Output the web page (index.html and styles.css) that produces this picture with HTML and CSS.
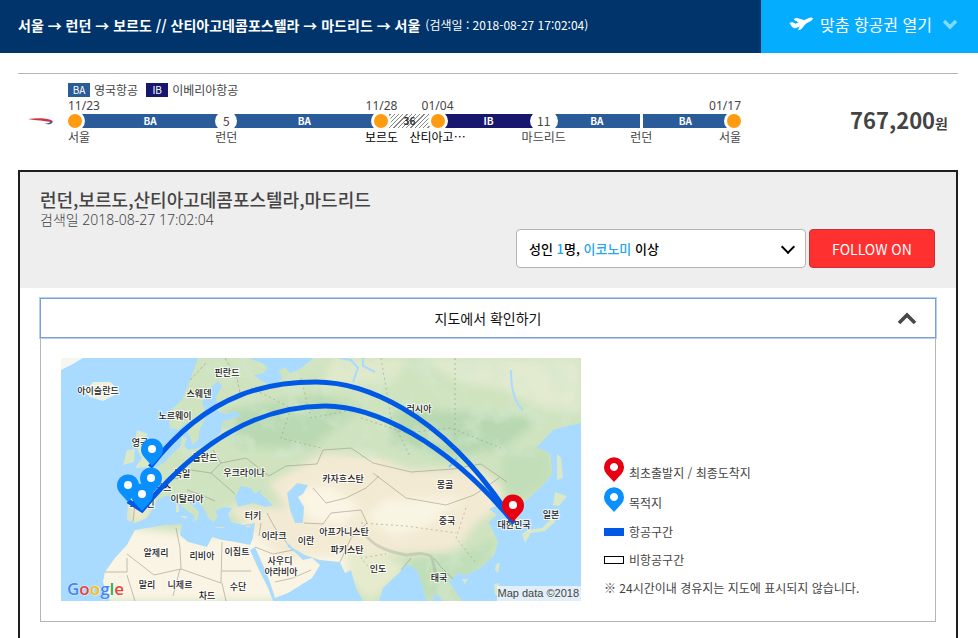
FILE: index.html
```
<!DOCTYPE html>
<html lang="ko">
<head>
    <meta charset="UTF-8">
    <meta name="viewport" content="width=device-width, initial-scale=1.0">
    <title>항공권 검색 결과</title>
    <link rel="stylesheet" href="styles.css">
</head>
<body>

    <!-- 상단 바 -->
    <header class="topbar">
        <div class="topbar-route">
            <h1>서울 → 런던 → 보르도 // 산티아고데콤포스텔라 → 마드리드 → 서울</h1>
            <span class="topbar-date">(검색일 : 2018-08-27 17:02:04)</span>
        </div>
        <button type="button" class="topbar-open">
            <svg class="icon-plane" viewBox="0 0 24 16" aria-hidden="true">
                <path d="M1 7.2 L3.2 6.6 L6.6 8.2 L10.6 6.4 L5 3.4 L7.4 2.4 L15.4 4.6 L19.6 2.6 C21.4 1.8 23.2 1.8 23.4 2.4 C23.6 3.2 22.6 4.2 21.4 4.8 L17 7 L11.8 13 L9.6 13.8 L11.6 9.6 L7.4 11.4 C5.8 12 4.4 12 3.6 11 Z" fill="#fff" stroke="#fff" stroke-linejoin="round"/>
            </svg>
            맞춤 항공권 열기
            <svg class="icon-chevron" viewBox="0 0 16 12" aria-hidden="true">
                <path d="M2 3 L8 9 L14 3" fill="none" stroke="#7fdcff" stroke-width="3.4"/>
            </svg>
        </button>
    </header>

    <main class="content">

        <!-- 여정 요약 -->
        <section class="summary">
            <svg class="airline-logo" viewBox="0 0 26 10" aria-hidden="true">
                <path d="M0 2 C8 1 18 1 23 3 C25 4 25 5 24 6 C22 4 12 4 0 2Z" fill="#cf3346"/>
                <path d="M16 6 C19 7 22 6 24 4 C25 6 22 9 16 6Z" fill="#2a4f96"/>
            </svg>
            <div class="itinerary">
                <ul class="airlines">
                    <li><span class="code ba">BA</span>영국항공</li>
                    <li><span class="code ib">IB</span>이베리아항공</li>
                </ul>
                <div class="route">
                    <span class="date c1 first">11/23</span>
                    <span class="date c5">11/28</span>
                    <span class="date c7">01/04</span>
                    <span class="date c13 last">01/17</span>

                    <span class="stop c1"></span>
                    <span class="leg ba c2">BA</span>
                    <span class="via c3">5</span>
                    <span class="leg ba c4">BA</span>
                    <span class="stop c5"></span>
                    <span class="leg ground c6">36</span>
                    <span class="stop c7"></span>
                    <span class="leg ib c8">IB</span>
                    <span class="via c9">11</span>
                    <span class="leg ba c10">BA</span>
                    <span class="leg ba c12">BA</span>
                    <span class="stop c13"></span>

                    <span class="city c1 first">서울</span>
                    <span class="city c3">런던</span>
                    <span class="city strong c5">보르도</span>
                    <span class="city strong c7">산티아고⋯</span>
                    <span class="city c9">마드리드</span>
                    <span class="city c11">런던</span>
                    <span class="city c13 last">서울</span>
                </div>
            </div>
            <p class="price">767,200<small>원</small></p>
        </section>

        <!-- 상세 -->
        <section class="panel">
            <div class="panel-head">
                <h2>런던,보르도,산티아고데콤포스텔라,마드리드</h2>
                <p class="panel-date">검색일 2018-08-27 17:02:04</p>
                <div class="panel-actions">
                    <select class="passenger" aria-label="인원 및 좌석 등급">
                        <button type="button"><selectedcontent></selectedcontent></button>
                        <option>성인 <em>1</em>명, <em>이코노미</em> 이상</option>
                    </select>
                    <button type="button" class="follow">FOLLOW ON</button>
                </div>
            </div>

            <div class="map-section">
                <button type="button" class="map-toggle" aria-expanded="true">
                    <span>지도에서 확인하기</span>
                    <svg class="icon-up" viewBox="0 0 20 14" aria-hidden="true">
                        <path d="M2 12 L10 4 L18 12" fill="none" stroke="#484848" stroke-width="3.6"/>
                    </svg>
                </button>
                <div class="map-body">
                    <svg class="map" viewBox="0 0 520 243" role="img" aria-label="항공 경로 지도">
                        <defs>
                            <filter id="soft" x="-20%" y="-20%" width="140%" height="140%">
                                <feGaussianBlur stdDeviation="4"/>
                            </filter>
                            <filter id="mottle" x="0" y="0" width="100%" height="100%">
                                <feTurbulence type="fractalNoise" baseFrequency="0.045" numOctaves="4" seed="7"/>
                                <feColorMatrix values="0 0 0 0 0.66  0 0 0 0 0.81  0 0 0 0 0.62  3 0 0 0 -1.35"/>
                            </filter>
                            <clipPath id="land">
                                <path id="eurasia" d="M137 0 L129 22 L121 42 L107 55 L109 70 L117 72 L126 64 L127 75 L132 87 L137 82 L139 70 L146 57 L141 45 L147 32 L157 23 L161 28 L155 39 L157 53 L164 56 L174 53 L181 58 L170 61 L161 64 L160 74 L154 80 L147 86 L137 90 L127 92 L123 88 L126 80 L121 78 L119 89 L112 95 L105 103 L96 109 L82 114 L92 122 L90 135 L67 140 L66 162 L74 165 L86 160 L92 150 L97 141 L109 137 L117 144 L124 151 L134 158 L132 164 L137 161 L138 154 L129 145 L126 137 L132 139 L142 149 L148 161 L153 164 L157 159 L154 153 L162 149 L171 150 L167 156 L170 164 L182 167 L194 165 L192 180 L189 187 L174 184 L161 182 L151 179 L146 189 L127 184 L119 177 L121 166 L104 167 L74 172 L66 187 L54 200 L44 214 L42 224 L49 243 L212 243 L207 230 L197 210 L189 192 L194 189 L202 207 L209 224 L214 240 L227 235 L251 220 L259 207 L251 200 L242 202 L236 196 L227 189 L224 182 L232 190 L244 197 L259 202 L279 204 L284 215 L290 212 L295 230 L302 243 L318 243 L322 230 L339 214 L346 206 L356 212 L361 226 L366 243 L372 243 L373 235 L383 243 L401 243 L388 224 L396 215 L405 217 L419 210 L433 198 L437 184 L428 164 L436 157 L428 151 L440 146 L446 157 L446 170 L454 171 L459 162 L452 150 L466 142 L480 129 L491 116 L490 97 L483 92 L475 90 L492 72 L506 68 L520 65 L520 0 Z M188 0 L201 5 L207 10 L203 15 L193 17 L199 22 L209 27 L216 26 L221 20 L218 12 L224 9 L229 15 L237 12 L248 4 L252 0 Z M174 139 L180 128 L190 130 L194 136 L201 131 L199 135 L212 147 L204 149 L192 145 L177 149 Z M226 135 L236 125 L247 127 L242 136 L237 139 L243 149 L242 165 L234 165 L229 152 Z" clip-rule="evenodd"/>
                            </clipPath>
                            <g id="pin">
                                <path d="M0 17 L-8 8 A11 11 0 1 1 8 8 Z" stroke-linejoin="round"/>
                                <circle r="4" fill="#fff"/>
                            </g>
                        </defs>

                        <!-- 바다 -->
                        <rect width="520" height="243" fill="#a9daff"/>

                        <!-- 육지 -->
                        <g clip-path="url(#land)">
                            <rect width="520" height="243" fill="#cfe3bf"/>
                            <g filter="url(#soft)">
                                <path d="M30 165 L150 178 L200 165 L260 165 L300 200 L270 243 L20 243 Z" fill="#faf4e4"/>
                                <path d="M165 148 L225 150 L208 125 L240 108 L262 95 L310 97 L350 112 L420 112 L442 130 L438 150 L415 165 L395 192 L345 196 L300 195 L220 200 Z" fill="#f3ead3"/>
                                <path d="M230 132 L270 128 L300 150 L280 168 L250 162 Z" fill="#faf5e4"/>
                                <path d="M285 192 L320 195 L345 210 L310 243 L285 220 Z" fill="#e7ebcd"/>
                                <path d="M360 0 L520 0 L520 55 L480 50 L440 30 L400 25 Z" fill="#e2eacf"/>
                                <path d="M270 0 L350 0 L330 25 L260 30 Z" fill="#e0e9cb"/>
                                <path d="M70 143 L92 145 L84 164 L68 162 Z" fill="#f0ead0"/>
                                <path d="M150 55 L260 36 L300 50 L250 90 L180 90 Z" fill="#b9d9b2"/>
                                <path d="M330 50 L420 55 L480 60 L440 92 L380 100 L330 85 Z" fill="#b7d8b1"/>
                                <path d="M345 200 L395 198 L435 180 L430 205 L395 243 L355 240 Z" fill="#c0deb7"/>
                                <path d="M440 95 L490 90 L490 125 L455 145 L440 130 Z" fill="#c2deb9"/>
                                <path d="M305 160 L325 142 L400 140 L370 165 L335 178 Z" fill="#f9f5e3"/>
                            </g>
                            <rect width="520" height="100" filter="url(#mottle)" opacity=".6"/>
                            <rect x="365" y="190" width="80" height="53" filter="url(#mottle)" opacity=".6"/>
                            <rect x="60" y="100" width="110" height="60" filter="url(#mottle)" opacity=".4"/>
                            <path d="M303 175 C312 188 325 193 345 197 C355 196 362 194 370 198 C374 206 372 214 378 222" fill="none" stroke="#9dad98" stroke-width="3" opacity=".4"/>
                            <path d="M279 0 L290 2 L297 10 L292 24 M302 0 L302 8 L314 14 M450 12 Q450 42 462 52" fill="none" stroke="#a9daff" stroke-width="2"/>
                            <path d="M388 109 L396 100" stroke="#8fc9f5" stroke-width="2"/>
                        </g>
                        <g fill="#dbe8c7">
                            <path d="M76 72 L87 76 L82 82 L88 95 L95 102 L91 109 L74 110 L81 100 L77 93 L74 84 Z"/>
                            <path d="M66 92 L74 91 L73 104 L62 107 Z"/>
                            <path d="M21 27 L28 29 L32 24 L49 24 L56 30 L54 37 L42 43 L29 39 L22 33 Z" fill="#eef0e0"/>
                            <path d="M0 0 H22 L12 6 L0 12 Z" fill="#f6f6f0"/>
                            <path d="M461 176 L467 172 L481 170 L490 161 L492 152 L496 151 L494 164 L484 173 L470 175 L464 185 Z"/>
                            <path d="M492 147 L494 134 L506 138 L498 148 Z"/>
                            <path d="M496 96 L500 100 L502 120 L496 122 Z"/>
                            <path d="M435 206 L439 205 L437 215 L434 212 Z"/>
                            <path d="M433 226 L438 225 L440 240 L434 236 Z"/>
                            <path d="M401 221 h6 l-3 5 Z"/>
                            <path d="M119 158 h7 l-1 3 Z M115 147 h3 v7 h-3 Z M155 169 h8 v1 h-8 Z M184 168 l7 -1 -4 3 Z"/>
                        </g>

                        <!-- 국경선 -->
                        <g fill="none" stroke="#9b9b8c" stroke-width=".8" opacity=".75">
                            <path d="M66 196 L93 217 L120 211 L119 190 L115 170 M120 211 L160 225 L161 184 M161 213 L190 213 M44 214 H66 V200 M66 217 L74 243 M119 211 L112 238 M161 225 L165 243 M194 189 L212 196 L232 192 M200 165 L198 178 M214 224 L232 220 L250 212"/>
                            <path d="M208 118 L225 108 L256 106 L262 92 L290 90 L312 105 L350 114 L392 111 L420 106 L446 124 M312 115 L345 140 L385 147 L413 137 L438 120 M252 130 L265 145 L285 140 L305 130 L318 118 M243 165 L262 166 L270 155 L300 152 L306 165 L290 180 L279 204"/>
                            <path d="M152 92 L160 105 L150 115 L130 112 L118 120 L104 122 M160 105 L185 100 L208 118 M150 115 L165 128 L174 136 M126 132 L140 137 L154 143 M206 155 L214 170 L225 184 M67 142 L74 145 L72 164 M340 212 L350 200 M373 200 L379 208 L392 221"/>
                            <path d="M164 0 L176 20 L180 40 M129 22 L145 5" stroke-dasharray="3 2"/>
                            <path d="M190 30 L230 50 L220 80 L260 90 M240 20 L250 60 L300 50 M320 0 L330 60 L350 100 M394 0 V80 M300 60 L345 75 L390 70 L440 90 M310 212 L300 200 L325 196 M405 150 L395 180 L415 205 M300 165 L345 168 L395 175" stroke-dasharray="2 3"/>
                        </g>

                        <!-- 지명 -->
                        <g class="map-labels">
                            <text x="37" y="36">아이슬란드</text>
                            <text x="166" y="18">핀란드</text>
                            <text x="138" y="39">스웨덴</text>
                            <text x="114" y="61">노르웨이</text>
                            <text x="79" y="88">영국</text>
                            <text x="144" y="103">폴란드</text>
                            <text x="121" y="119">독일</text>
                            <text x="183" y="118">우크라이나</text>
                            <text x="98" y="133">프랑스</text>
                            <text x="81" y="149">스페인</text>
                            <text x="126" y="144">이탈리아</text>
                            <text x="192" y="161">터키</text>
                            <text x="213" y="181">이라크</text>
                            <text x="245" y="186">이란</text>
                            <text x="95" y="198">알제리</text>
                            <text x="141" y="201">리비아</text>
                            <text x="176" y="197">이집트</text>
                            <text x="219" y="206">사우디</text>
                            <text x="220" y="217">아라비아</text>
                            <text x="86" y="230">말리</text>
                            <text x="119" y="230">니제르</text>
                            <text x="146" y="241">차드</text>
                            <text x="177" y="232">수단</text>
                            <text x="358" y="54">러시아</text>
                            <text x="282" y="124">카자흐스탄</text>
                            <text x="384" y="130">몽골</text>
                            <text x="386" y="166">중국</text>
                            <text x="453" y="170">대한민국</text>
                            <text x="490" y="160">일본</text>
                            <text x="283" y="177">아프가니스탄</text>
                            <text x="286" y="195">파키스탄</text>
                            <text x="317" y="214">인도</text>
                            <text x="378" y="223">태국</text>
                        </g>

                        <!-- 항공 경로 -->
                        <g fill="none" stroke="#0059e5" stroke-width="5">
                            <path d="M89 109 C150 30 215 24 255 24 C295 24 378 46 453 165"/>
                            <path d="M67 143 L81 152 C140 80 200 48 264 48 C312 48 385 82 453 165"/>
                        </g>

                        <use href="#pin" x="91" y="91" fill="#0a8fff"/>
                        <use href="#pin" x="90" y="120" fill="#0a8fff"/>
                        <use href="#pin" x="67" y="127" fill="#0a8fff"/>
                        <use href="#pin" x="81" y="136" fill="#0a8fff"/>
                        <use href="#pin" x="452" y="147" fill="#e60012"/>

                        <text class="map-brand" x="6" y="237"><tspan fill="#4285f4">G</tspan><tspan fill="#ea4335">o</tspan><tspan fill="#fbbc05">o</tspan><tspan fill="#4285f4">g</tspan><tspan fill="#34a853">l</tspan><tspan fill="#ea4335">e</tspan></text>
                        <rect x="436" y="228" width="84" height="15" fill="#f5f5f5" opacity=".75"/>
                        <text class="map-credit" x="518" y="239">Map data ©2018</text>
                    </svg>

                    <ul class="legend">
                        <li class="legend-pin">
                            <svg viewBox="0 0 20 25" aria-hidden="true">
                                <path d="M10 25 L2.6 17 A10 10 0 1 1 17.4 17 Z M10 6 a4 4 0 1 0 .01 0 Z" fill="#e60012" fill-rule="evenodd"/>
                            </svg>
                            <span>최초출발지 / 최종도착지</span>
                        </li>
                        <li class="legend-pin">
                            <svg viewBox="0 0 20 25" aria-hidden="true">
                                <path d="M10 25 L2.6 17 A10 10 0 1 1 17.4 17 Z M10 6 a4 4 0 1 0 .01 0 Z" fill="#0a8fff" fill-rule="evenodd"/>
                            </svg>
                            <span>목적지</span>
                        </li>
                        <li><i class="swatch flight"></i>항공구간</li>
                        <li><i class="swatch"></i>비항공구간</li>
                        <li>※ 24시간이내 경유지는 지도에 표시되지 않습니다.</li>
                    </ul>
                </div>
            </div>
        </section>
    </main>

</body>
</html>
```
FILE: styles.css
```
:root {
    --color-navy: #00346b;
    --color-sky: #05adff;
    --color-ba: #2b5c9a;
    --color-ib: #17176e;
    --color-stop: #ff9b0e;
    --color-text: #444444;
    --color-line: #b5b5b5;
    --color-red: #ff3030;
}

/* --- 기본 --- */
* {
    box-sizing: border-box;
}

body {
    margin: 0;
    background: #fff;
    color: var(--color-text);
    font-family: "Noto Sans CJK KR", "Noto Sans", sans-serif;
    font-size: 12px;
    line-height: 16px;
}

h1, h2, p, ul {
    margin: 0;
    padding: 0;
}

ul {
    list-style: none;
}

button, select {
    font-family: inherit;
    cursor: pointer;
}

/* --- 상단 바 --- */
.topbar {
    display: flex;
    height: 53px;
    background: var(--color-navy);
    color: #fff;
}

.topbar-route {
    flex: 1;
    display: flex;
    align-items: center;
    gap: 5px;
    padding: 0 0 4px 18px;
    white-space: nowrap;
}

.topbar h1 {
    font-size: 14px;
    font-weight: 700;
}

.topbar-open {
    display: flex;
    align-items: center;
    gap: 7px;
    padding: 0 20px 5px 28px;
    border: 0;
    background: var(--color-sky);
    color: #fff;
    font-size: 16px;
}

.icon-plane {
    width: 24px;
    height: 16px;
}

.icon-chevron {
    width: 16px;
    height: 12px;
    margin-left: 3px;
}

/* --- 여정 요약 --- */
.content {
    margin: 20px 20px 0 18px;
}

.summary {
    display: flex;
    align-items: flex-start;
    padding: 8px 10px 0;
    border-top: 1px solid var(--color-line);
    height: 97px;
}

.airline-logo {
    width: 26px;
    height: 10px;
    margin: 35px 11px 0 0;
}

.itinerary {
    flex: 1;
}

.airlines {
    display: flex;
    gap: 8px;
    padding-left: 3px;
}

.airlines li {
    display: flex;
    align-items: center;
    gap: 4px;
}

.code {
    width: 22px;
    height: 14px;
    color: #fff;
    font-size: 10px;
    line-height: 14px;
    text-align: center;
}

.ba {
    background: var(--color-ba);
}

.ib {
    background: var(--color-ib);
}

.route {
    display: grid;
    grid-template-columns:
        20px 130fr 22px 134fr 20px 36fr 20px 82fr 28px 82fr 3px 81fr 20px;
    grid-template-rows: 16px 14px 18px;
    align-items: center;
}

.date, .city {
    justify-self: center;
    white-space: nowrap;
}

.date {
    grid-row: 1;
    font-family: "Noto Sans", sans-serif;
}

.city {
    grid-row: 3;
}

.city.strong {
    color: #000;
}

.first {
    justify-self: start;
    padding-left: 3px;
}

.last {
    justify-self: end;
    padding-right: 3px;
}

.leg {
    grid-row: 2;
    margin: 0 -4px;
    color: #fff;
    font-size: 10px;
    font-weight: 700;
    line-height: 14px;
    text-align: center;
}

.leg.c10 {
    margin-right: 0;
}

.leg.c12 {
    margin-left: 0;
}

.leg.ground {
    background: repeating-linear-gradient(135deg, #fff 0 2px, #888 2px 3px);
    color: #333;
}

.stop, .via {
    grid-row: 2;
    z-index: 1;
    height: 20px;
    border-radius: 10px;
    background: #fff;
    text-align: center;
}

.stop {
    border: 3px solid #fff;
    background: var(--color-stop);
}

.via {
    line-height: 20px;
}

.c1 { grid-column: 1; }
.c2 { grid-column: 2; }
.c3 { grid-column: 3; }
.c4 { grid-column: 4; }
.c5 { grid-column: 5; }
.c6 { grid-column: 6; }
.c7 { grid-column: 7; }
.c8 { grid-column: 8; }
.c9 { grid-column: 9; }
.c10 { grid-column: 10; }
.c11 { grid-column: 11; }
.c12 { grid-column: 12; }
.c13 { grid-column: 13; }

.price {
    width: 204px;
    padding-top: 21px;
    font-size: 22px;
    font-weight: 700;
    line-height: 32px;
    text-align: right;
}

.price small {
    font-size: 14px;
}

/* --- 상세 패널 --- */
.panel {
    border: 2px solid #1f1f1f;
    border-bottom: 0;
}

.panel-head {
    height: 116px;
    padding: 15px 21px 0 20px;
    background: #eee;
}

.panel-head h2 {
    font-size: 18px;
    font-weight: 500;
    line-height: 24px;
}

.panel-date {
    font-family: "Noto Sans", "Noto Sans CJK KR", sans-serif;
    font-size: 14px;
    line-height: 18px;
    font-weight: 300;
}

.panel-actions {
    display: flex;
    justify-content: flex-end;
    gap: 3px;
}

.passenger,
.passenger::picker(select) {
    appearance: base-select;
}

.passenger {
    display: flex;
    align-items: center;
    width: 290px;
    height: 39px;
    padding: 0 10px 0 12px;
    border: 1px solid var(--color-line);
    border-radius: 4px;
    background: #fff;
    color: #000;
    font-size: 13px;
    font-weight: 500;
}

.passenger em {
    color: #22a7f0;
    font-style: normal;
}

.passenger::picker-icon {
    content: "";
    width: 8px;
    height: 8px;
    margin: 0 2px 4px auto;
    border: solid #000;
    border-width: 0 2px 2px 0;
    rotate: 45deg;
}

.follow {
    width: 126px;
    height: 39px;
    border: 1px solid #c62f36;
    border-radius: 4px;
    background: var(--color-red);
    color: #fff;
    font-size: 14px;
}

/* --- 지도 --- */
.map-section {
    padding: 10px 20px 16px;
}

.map-toggle {
    display: flex;
    align-items: center;
    width: 100%;
    height: 40px;
    padding: 0 18px;
    border: 1px solid #7c9fd3;
    background: #fff;
    box-shadow: 0 0 0 1px #b9cfee;
    color: #111;
    font-size: 14px;
}

.map-toggle span {
    flex: 1;
    padding-left: 20px;
}

.icon-up {
    width: 20px;
    height: 14px;
}

.map-body {
    display: flex;
    align-items: flex-end;
    gap: 23px;
    padding: 20px;
    border: 1px solid var(--color-line);
    border-top: 0;
}

.map {
    flex: 0 1 520px;
    min-width: 0;
}

.map-labels {
    fill: #222;
    stroke: rgba(255, 255, 255, 0.8);
    stroke-width: 2px;
    paint-order: stroke;
    font-size: 9px;
    font-weight: 500;
    text-anchor: middle;
}

.map-brand {
    stroke: rgba(255, 255, 255, 0.7);
    stroke-width: 1px;
    paint-order: stroke;
    font-family: "Open Sans", sans-serif;
    font-size: 17px;
    font-weight: 600;
}

.map-credit {
    fill: #444;
    font-family: "Liberation Sans", Arial, sans-serif;
    font-size: 11px;
    text-anchor: end;
}

.legend {
    display: flex;
    flex-direction: column;
    gap: 12px;
    padding-bottom: 5px;
    white-space: nowrap;
}

.legend li {
    display: flex;
    align-items: center;
    gap: 5px;
}

.legend-pin {
    height: 18px;
}

.legend-pin svg {
    width: 20px;
    height: 25px;
    margin-bottom: 8px;
}

.swatch {
    width: 20px;
    height: 8px;
    border: 1px solid #000;
}

.swatch.flight {
    border-color: #0059e5;
    background: #0059e5;
}
```
